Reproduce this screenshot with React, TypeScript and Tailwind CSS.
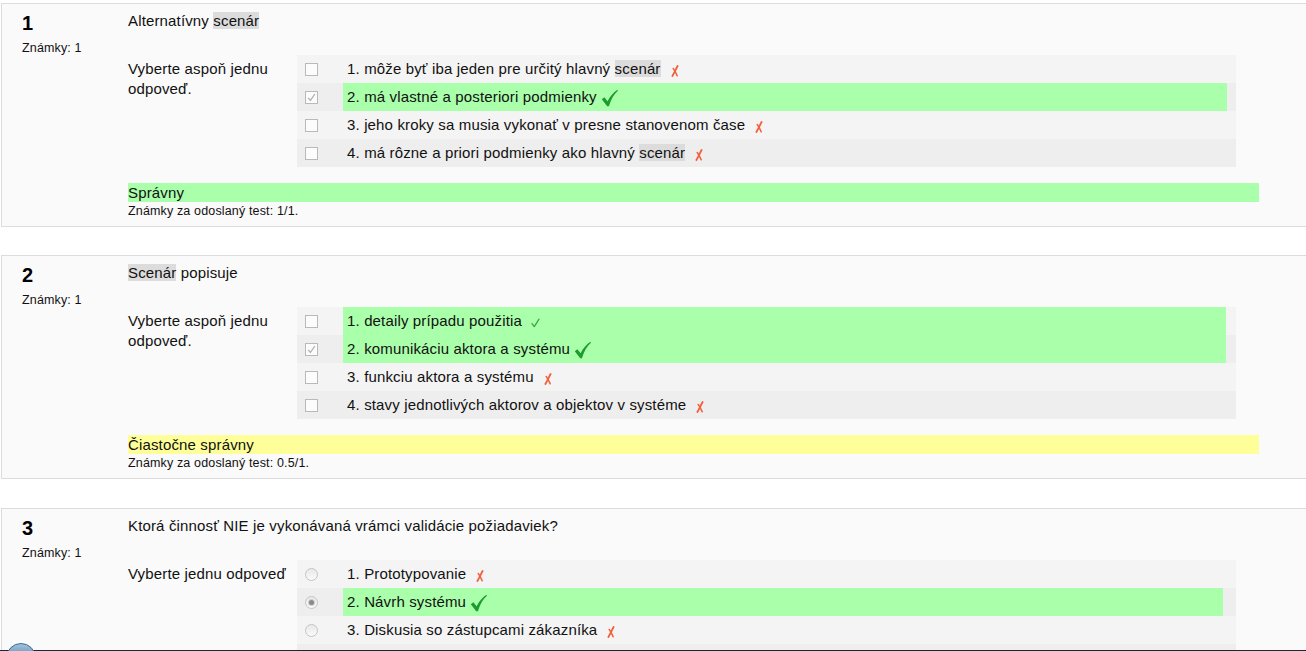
import React from "react";

type Mark = "x" | "big" | "small" | "none";
type Opt = { text: React.ReactNode; mark: Mark; green?: boolean; checked?: boolean; hideControl?: boolean };
type Q = {
  num: number;
  question: React.ReactNode;
  prompt: React.ReactNode;
  kind: "checkbox" | "radio";
  options: Opt[];
  feedback: string;
  fbClass: string;
  grade: string;
  greenPr: string;
  gapTop: string;
  showFooter: boolean;
};

const Hl = ({ children }: { children: React.ReactNode }) => (
  <span className="bg-[#dcdcdc]">{children}</span>
);

const BigCheck = () => (
  <svg width="17" height="18" viewBox="0 0 17 18" className="ml-[4px] translate-y-[1px] shrink-0">
    <path
      d="M0.8 10.2 L3.4 8.2 L6.6 12.2 C9 7.4 12.4 3.4 16.4 0.8 L16.9 1.8 C12.8 5.4 10 10.4 7.9 17.2 L6.2 17.2 Z"
      fill="#1c9c2e"
    />
  </svg>
);

const SmallCheck = () => (
  <svg width="9" height="10" viewBox="0 0 9 10" className="ml-[9px] translate-y-[2px] shrink-0">
    <path d="M1 5.6 L3.3 8.6 L8 1.2" stroke="#34a83f" strokeWidth="1.3" fill="none" strokeLinecap="round" strokeLinejoin="round" />
  </svg>
);

const XMark = () => (
  <svg width="8" height="12" viewBox="0 0 8 12" className="ml-[10px] translate-y-[2px] shrink-0">
    <path d="M6.6 1 C5 4 3.4 7.4 1.4 11" stroke="#f2603e" strokeWidth="1.8" fill="none" strokeLinecap="round" />
    <path d="M2.2 3.6 C3.4 5 4.6 7.6 6.2 10.8" stroke="#f2603e" strokeWidth="1.5" fill="none" strokeLinecap="round" />
  </svg>
);

const Checkbox = ({ checked }: { checked?: boolean }) => (
  <div className="flex h-[13px] w-[13px] items-center justify-center border border-[#b9b9b9] bg-[#fcfcfc]">
    {checked && (
      <svg width="9" height="9" viewBox="0 0 9 9">
        <path d="M1.2 4.8 L3.4 7.4 L7.8 1.2" stroke="#b0b0b0" strokeWidth="1.2" fill="none" />
      </svg>
    )}
  </div>
);

const Radio = ({ checked }: { checked?: boolean }) => (
  <div className="flex h-[13px] w-[13px] items-center justify-center rounded-full border border-[#c4c4c4] bg-gradient-to-b from-[#e8e8e8] to-[#fafafa]">
    {checked && <div className="h-[5px] w-[5px] rounded-full bg-[#8a8a8a] ring-1 ring-[#d0d0d0]" />}
  </div>
);

const questions: Q[] = [
  {
    num: 1,
    question: (
      <>
        Alternatívny <Hl>scenár</Hl>
      </>
    ),
    prompt: "Vyberte aspoň jednu odpoveď.",
    kind: "checkbox",
    options: [
      { text: <>1. môže byť iba jeden pre určitý hlavný <Hl>scenár</Hl></>, mark: "x" },
      { text: "2. má vlastné a posteriori podmienky", mark: "big", green: true, checked: true },
      { text: "3. jeho kroky sa musia vykonať v presne stanovenom čase", mark: "x" },
      { text: <>4. má rôzne a priori podmienky ako hlavný <Hl>scenár</Hl></>, mark: "x" },
    ],
    feedback: "Správny",
    fbClass: "bg-[#aaffaa]",
    grade: "Známky za odoslaný test: 1/1.",
    greenPr: "pr-[9px]",
    gapTop: "mt-0",
    showFooter: true,
  },
  {
    num: 2,
    question: (
      <>
        <Hl>Scenár</Hl> popisuje
      </>
    ),
    prompt: "Vyberte aspoň jednu odpoveď.",
    kind: "checkbox",
    options: [
      { text: "1. detaily prípadu použitia", mark: "small", green: true },
      { text: "2. komunikáciu aktora a systému", mark: "big", green: true, checked: true },
      { text: "3. funkciu aktora a systému", mark: "x" },
      { text: "4. stavy jednotlivých aktorov a objektov v systéme", mark: "x" },
    ],
    feedback: "Čiastočne správny",
    fbClass: "bg-[#ffff99]",
    grade: "Známky za odoslaný test: 0.5/1.",
    greenPr: "pr-[10px]",
    gapTop: "mt-[28px]",
    showFooter: true,
  },
  {
    num: 3,
    question: "Ktorá činnosť NIE je vykonávaná vrámci validácie požiadaviek?",
    prompt: "Vyberte jednu odpoveď",
    kind: "radio",
    options: [
      { text: "1. Prototypovanie", mark: "x" },
      { text: "2. Návrh systému", mark: "big", green: true, checked: true },
      { text: "3. Diskusia so zástupcami zákazníka", mark: "x" },
      { text: "", mark: "none", hideControl: true },
    ],
    feedback: "",
    fbClass: "",
    grade: "",
    greenPr: "pr-[13px]",
    gapTop: "mt-[29px]",
    showFooter: false,
  },
];

const Question = ({ q }: { q: Q }) => (
  <div className={`flex border border-[#dcdcdc] bg-[#fafafa] ${q.gapTop}`}>
    <div className="w-[126px] shrink-0 pl-[20px] pt-[7px]">
      <div className="text-[20px] font-bold leading-[24px] text-black">{q.num}</div>
      <div className="mt-[6px] text-[12.5px] leading-[15px]">Známky: 1</div>
    </div>
    <div className="w-[1131px] shrink-0 pb-[7px] pt-[7px]">
      <div className="leading-[20px]">{q.question}</div>
      <div className="mt-[24px] flex">
        <div className="w-[169px] shrink-0 pr-[10px] pt-[4px] leading-[20px]">{q.prompt}</div>
        <div className="w-[939px] shrink-0">
          {q.options.map((o, i) => (
            <div
              key={i}
              className={`flex h-[28px] ${q.greenPr} ${i % 2 === 0 ? "bg-[#f4f4f4]" : "bg-[#eeeeee]"}`}
            >
              <div className="flex w-[46px] shrink-0 items-center pl-[8px]">
                {o.hideControl ? null : q.kind === "checkbox" ? (
                  <Checkbox checked={o.checked} />
                ) : (
                  <Radio checked={o.checked} />
                )}
              </div>
              <div className={`flex flex-1 items-center pl-[4px] ${o.green ? "bg-[#aaffaa]" : ""}`}>
                <span className="whitespace-nowrap">{o.text}</span>
                {o.mark === "x" ? (
                  <XMark />
                ) : o.mark === "big" ? (
                  <BigCheck />
                ) : o.mark === "small" ? (
                  <SmallCheck />
                ) : null}
              </div>
            </div>
          ))}
        </div>
      </div>
      {q.showFooter && (
        <>
          <div className={`mt-[16px] h-[19px] leading-[19px] ${q.fbClass}`}>{q.feedback}</div>
          <div className="mt-[1px] text-[12.5px] leading-[16px]">{q.grade}</div>
        </>
      )}
    </div>
    <div className="w-[60px] shrink-0" />
  </div>
);

export default function App() {
  return (
    <div className="relative h-[651px] w-[1306px] overflow-hidden bg-white font-['Liberation_Sans',Arial,sans-serif] text-[15px] tracking-[0.15px] text-[#111]">
      <div className="flex w-[1340px] flex-col pl-px pt-[3px]">
        {questions.map((q) => (
          <Question key={q.num} q={q} />
        ))}
      </div>
      <div className="absolute bottom-0 left-0 h-px w-full bg-[#1d2633]" />
      <div className="absolute left-[6px] top-[643px] h-[30px] w-[30px] rounded-full border border-[#3d6a94] bg-gradient-to-b from-[#9fc2dd] to-[#2c5d8a]" />
    </div>
  );
}
